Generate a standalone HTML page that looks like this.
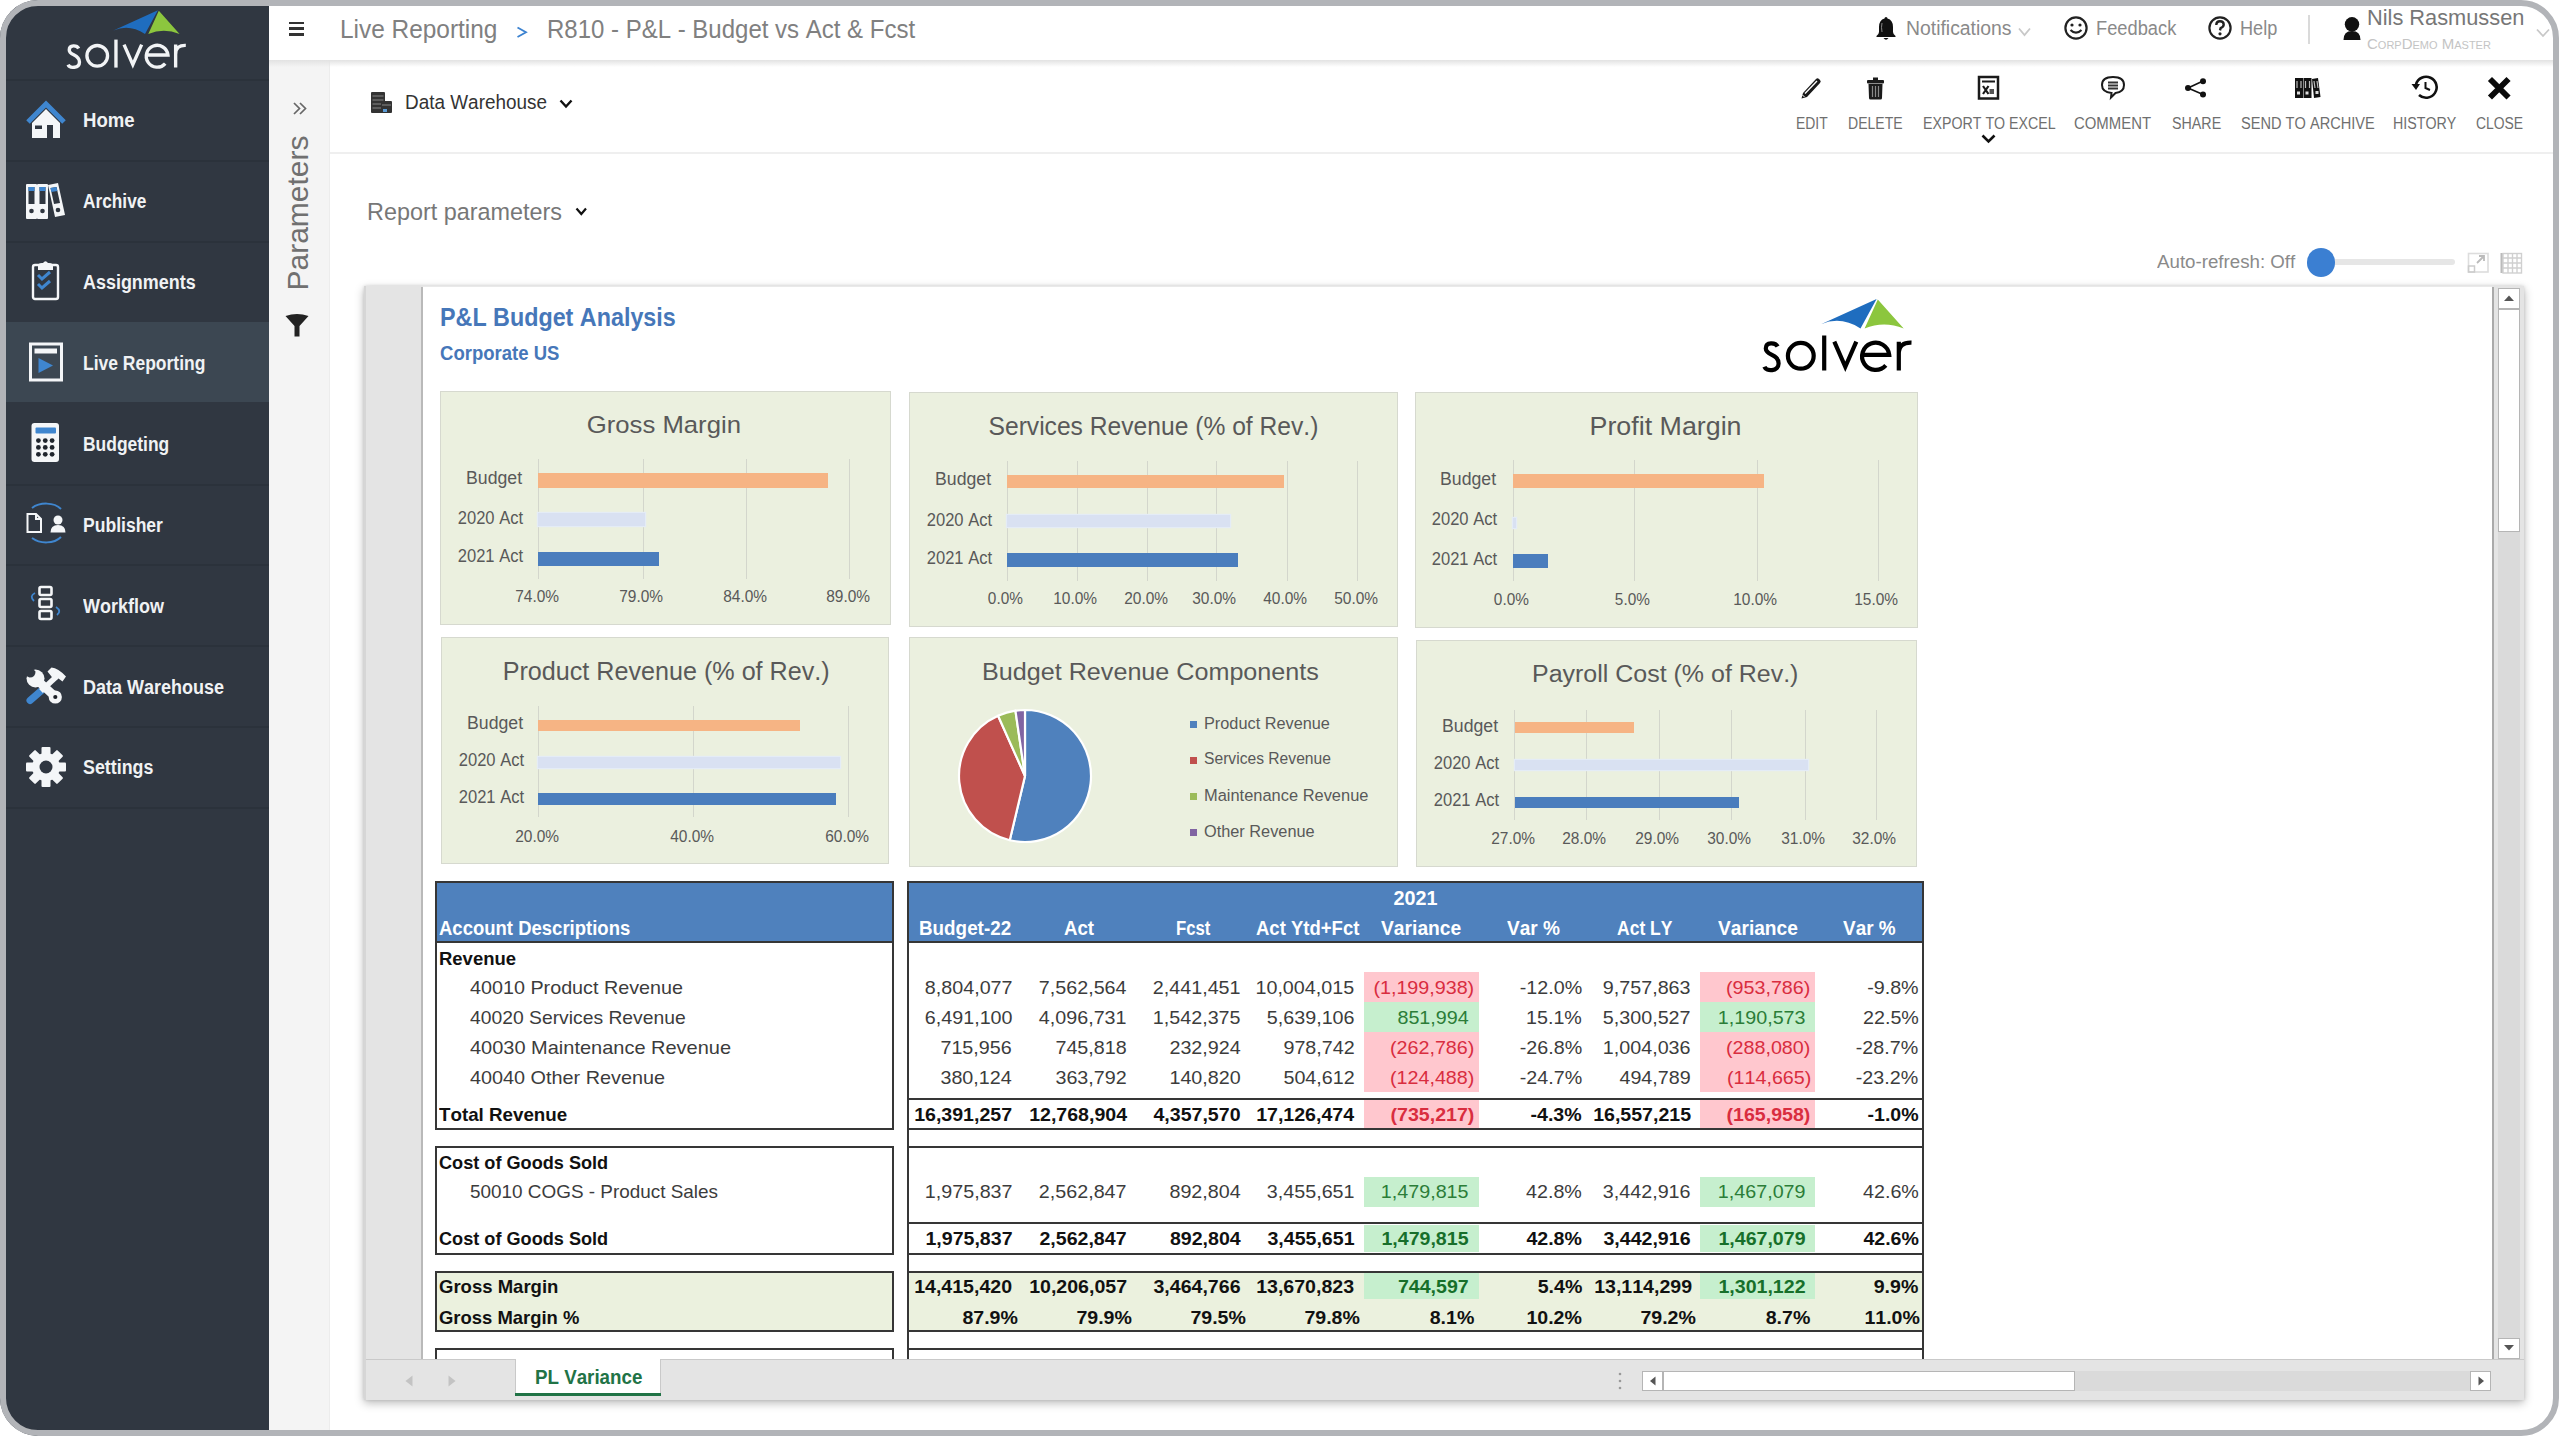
<!DOCTYPE html>
<html><head><meta charset="utf-8"><title>Solver - P&amp;L Budget vs Act &amp; Fcst</title>
<style>
html,body{margin:0;padding:0;width:2560px;height:1437px;overflow:hidden;background:#fff}
body{position:relative;font-family:"Liberation Sans",sans-serif;font-kerning:none}
.t{position:absolute;white-space:nowrap;line-height:1;font-family:"Liberation Sans",sans-serif}
svg{overflow:visible}
</style></head><body>
<div style="position:absolute;left:0px;top:0px;width:2560px;height:1437px;background:#fff"></div>
<div style="position:absolute;left:0px;top:0px;width:269px;height:1437px;background:#303741"></div>
<div style="position:absolute;left:0px;top:322px;width:269px;height:80px;background:#3c4752"></div>
<div style="position:absolute;left:0px;top:79px;width:269px;height:2px;background:#2b323b"></div>
<div style="position:absolute;left:0px;top:160px;width:269px;height:2px;background:#2b323b"></div>
<div style="position:absolute;left:0px;top:241px;width:269px;height:2px;background:#2b323b"></div>
<div style="position:absolute;left:0px;top:484px;width:269px;height:2px;background:#2b323b"></div>
<div style="position:absolute;left:0px;top:564px;width:269px;height:2px;background:#2b323b"></div>
<div style="position:absolute;left:0px;top:645px;width:269px;height:2px;background:#2b323b"></div>
<div style="position:absolute;left:0px;top:726px;width:269px;height:2px;background:#2b323b"></div>
<div style="position:absolute;left:0px;top:807px;width:269px;height:2px;background:#2b323b"></div>
<div style="position:absolute;left:269px;top:60px;width:61px;height:1380px;background:#f4f4f4"></div>
<div style="position:absolute;left:329px;top:60px;width:1px;height:1380px;background:#ececec"></div>
<div style="position:absolute;left:269px;top:0px;width:2291px;height:60px;background:#fff"></div>
<div style="position:absolute;left:269px;top:60px;width:2291px;height:7px;background:linear-gradient(#e2e2e2,rgba(255,255,255,0))"></div>
<div style="position:absolute;left:330px;top:152px;width:2230px;height:2px;background:#efefef"></div>
<div class="t" style="left:82.50px;top:110.25px;font-size:20.30px;font-weight:bold;color:#f0f2f4;transform:scaleX(0.9149);transform-origin:left 0;">Home</div>
<div class="t" style="left:82.50px;top:191.15px;font-size:20.30px;font-weight:bold;color:#f0f2f4;transform:scaleX(0.8513);transform-origin:left 0;">Archive</div>
<div class="t" style="left:82.50px;top:272.05px;font-size:20.30px;font-weight:bold;color:#f0f2f4;transform:scaleX(0.8849);transform-origin:left 0;">Assignments</div>
<div class="t" style="left:82.50px;top:352.95px;font-size:20.30px;font-weight:bold;color:#f0f2f4;transform:scaleX(0.8620);transform-origin:left 0;">Live Reporting</div>
<div class="t" style="left:82.50px;top:433.85px;font-size:20.30px;font-weight:bold;color:#f0f2f4;transform:scaleX(0.8600);transform-origin:left 0;">Budgeting</div>
<div class="t" style="left:82.50px;top:514.75px;font-size:20.30px;font-weight:bold;color:#f0f2f4;transform:scaleX(0.8649);transform-origin:left 0;">Publisher</div>
<div class="t" style="left:82.50px;top:595.65px;font-size:20.30px;font-weight:bold;color:#f0f2f4;transform:scaleX(0.8871);transform-origin:left 0;">Workflow</div>
<div class="t" style="left:82.50px;top:676.55px;font-size:20.30px;font-weight:bold;color:#f0f2f4;transform:scaleX(0.8881);transform-origin:left 0;">Data Warehouse</div>
<div class="t" style="left:82.50px;top:757.45px;font-size:20.30px;font-weight:bold;color:#f0f2f4;transform:scaleX(0.8791);transform-origin:left 0;">Settings</div>
<svg style="position:absolute;left:24px;top:100px;" width="44" height="42" viewBox="0 0 44 42"><path d="M4 22 L22 4 L40 22" fill="none" stroke="#3f86cf" stroke-width="5" stroke-linejoin="miter"/><path d="M8 23 L22 9 L36 23 L36 38 L29 38 L29 25 L23 25 L23 38 L8 38Z" fill="#f4f6f8"/><rect x="11" y="25.5" width="7" height="3.5" fill="#2f3640"/></svg>
<svg style="position:absolute;left:24px;top:182px;" width="44" height="40" viewBox="0 0 44 40"><g fill="#f4f6f8"><rect x="2" y="2" width="11" height="35" rx="1"/><rect x="13" y="2" width="11" height="35" rx="1"/><path d="M24 3 L34 1 L41 33 L31 35Z"/></g><g fill="#2f3640"><rect x="4.5" y="5" width="6" height="17"/><rect x="15.5" y="5" width="6" height="17"/><path d="M26.5 6 L32.5 5 L36 21 L30 22Z"/></g><g fill="#3f86cf"><rect x="4.5" y="5" width="6" height="4"/><rect x="15.5" y="5" width="6" height="4"/><path d="M26.5 6 L32.5 5 L33.3 9 L27.3 10Z"/></g><g fill="#2f3640"><circle cx="7.5" cy="29" r="2.3"/><circle cx="18.5" cy="29" r="2.3"/><circle cx="34" cy="28" r="2.3"/></g></svg>
<svg style="position:absolute;left:28px;top:258px;" width="36" height="46" viewBox="0 0 36 46"><rect x="5" y="7" width="25" height="34" rx="2" fill="none" stroke="#f4f6f8" stroke-width="2.4"/><path d="M10 12 L10 8 Q10 5 14 5 L15 5 Q17.5 1.5 20 5 L21 5 Q25 5 25 8 L25 12Z" fill="#f4f6f8"/><path d="M10 17 L14 21 L22 14 M10 26 L14 30 L22 23" fill="none" stroke="#3f86cf" stroke-width="3"/></svg>
<svg style="position:absolute;left:26px;top:340px;" width="40" height="44" viewBox="0 0 40 44"><rect x="4.5" y="4" width="31" height="36" fill="none" stroke="#f4f6f8" stroke-width="3"/><rect x="8.5" y="8.5" width="22.5" height="5" fill="#f4f6f8"/><path d="M12.5 18 L27 25.5 L12.5 33Z" fill="#3f86cf"/></svg>
<svg style="position:absolute;left:28px;top:420px;" width="36" height="46" viewBox="0 0 36 46"><rect x="3.5" y="3" width="27.5" height="39" rx="3" fill="#f4f6f8"/><rect x="7.5" y="7.5" width="20.5" height="6" rx="1" fill="#3f86cf"/><circle cx="10.4" cy="20.6" r="2.4" fill="#1f252d"/><circle cx="17.25" cy="20.6" r="2.4" fill="#1f252d"/><circle cx="24.1" cy="20.6" r="2.4" fill="#1f252d"/><circle cx="10.4" cy="27.450000000000003" r="2.4" fill="#1f252d"/><circle cx="17.25" cy="27.450000000000003" r="2.4" fill="#1f252d"/><circle cx="24.1" cy="27.450000000000003" r="2.4" fill="#1f252d"/><circle cx="10.4" cy="34.3" r="2.4" fill="#1f252d"/><circle cx="17.25" cy="34.3" r="2.4" fill="#1f252d"/><circle cx="24.1" cy="34.3" r="2.4" fill="#1f252d"/></svg>
<svg style="position:absolute;left:24px;top:505px;" width="46" height="36" viewBox="0 0 46 36"><path d="M8 3 C16 -3 30 -3 37 4" fill="none" stroke="#3f86cf" stroke-width="2"/><path d="M8 33 C16 39 30 39 37 32" fill="none" stroke="#3f86cf" stroke-width="2"/><path d="M3.5 9 L12 9 L17 14 L17 27 L3.5 27Z M12 9 L12 14 L17 14" fill="none" stroke="#f4f6f8" stroke-width="2"/><circle cx="34" cy="15" r="4.5" fill="#f4f6f8"/><path d="M26.5 27.5 Q26.5 20 34 20 Q41.5 20 41.5 27.5Z" fill="#f4f6f8"/></svg>
<svg style="position:absolute;left:24px;top:582px;" width="44" height="46" viewBox="0 0 44 46"><g fill="none" stroke="#f4f6f8" stroke-width="2.6"><rect x="15.5" y="5" width="12" height="8" rx="1.5"/><rect x="15.5" y="17" width="12" height="8" rx="1.5"/><rect x="15.5" y="29" width="12" height="8" rx="1.5"/></g><path d="M11 11 Q5 14 10 19" fill="none" stroke="#3f86cf" stroke-width="1.8"/><path d="M32 25 Q38 29 33 33" fill="none" stroke="#3f86cf" stroke-width="1.8"/></svg>
<svg style="position:absolute;left:18px;top:655px;" width="60" height="60" viewBox="0 0 60 60"><path d="M12 45.5 L23.5 35.5" stroke="#3f86cf" stroke-width="7" stroke-linecap="round"/><path d="M23 36 L38 22" stroke="#f4f6f8" stroke-width="5.5"/><path d="M29.5 16.5 L33.5 12.5 Q40 13 48 21.5 L44.5 26.5 L40.5 23.5 L37 26 Z" fill="#f4f6f8"/><path d="M19 25 L37.5 42" stroke="#f4f6f8" stroke-width="8.5" stroke-linecap="round"/><circle cx="37.3" cy="42" r="6.6" fill="#f4f6f8"/><circle cx="37.3" cy="42" r="2.1" fill="#1c2027"/><circle cx="17.5" cy="23.5" r="9" fill="#f4f6f8"/><path d="M4 19 L12 11 L17.5 16.5 Q17.5 22.5 11.5 22.5Z" fill="#303741"/></svg>
<svg style="position:absolute;left:22px;top:743px;" width="48" height="48" viewBox="0 0 48 48"><rect x="19.5" y="4" width="9" height="10" rx="1" transform="rotate(0 24 24)" fill="#f4f6f8"/><rect x="19.5" y="4" width="9" height="10" rx="1" transform="rotate(45 24 24)" fill="#f4f6f8"/><rect x="19.5" y="4" width="9" height="10" rx="1" transform="rotate(90 24 24)" fill="#f4f6f8"/><rect x="19.5" y="4" width="9" height="10" rx="1" transform="rotate(135 24 24)" fill="#f4f6f8"/><rect x="19.5" y="4" width="9" height="10" rx="1" transform="rotate(180 24 24)" fill="#f4f6f8"/><rect x="19.5" y="4" width="9" height="10" rx="1" transform="rotate(225 24 24)" fill="#f4f6f8"/><rect x="19.5" y="4" width="9" height="10" rx="1" transform="rotate(270 24 24)" fill="#f4f6f8"/><rect x="19.5" y="4" width="9" height="10" rx="1" transform="rotate(315 24 24)" fill="#f4f6f8"/><circle cx="24" cy="24" r="14" fill="#f4f6f8"/><circle cx="24" cy="24" r="6.5" fill="#2f3640"/></svg>
<div style="position:absolute;left:289px;top:21.8px;width:15px;height:2.6px;background:#333"></div>
<div style="position:absolute;left:289px;top:27.4px;width:15px;height:2.6px;background:#333"></div>
<div style="position:absolute;left:289px;top:33.0px;width:15px;height:2.6px;background:#333"></div>
<div class="t" style="left:340.00px;top:17.41px;font-size:25.40px;font-weight:normal;color:#808080;transform:scaleX(0.9616);transform-origin:left 0;">Live Reporting</div>
<svg style="position:absolute;left:516px;top:26px;" width="12" height="13" viewBox="0 0 12 13"><path d="M1.5 1.5 L10 6.3 L1.5 11" fill="none" stroke="#3b82d0" stroke-width="1.8"/></svg>
<div class="t" style="left:547.00px;top:17.41px;font-size:25.40px;font-weight:normal;color:#808080;transform:scaleX(0.9450);transform-origin:left 0;">R810 - P&amp;L - Budget vs Act &amp; Fcst</div>
<div class="t" style="left:1906.00px;top:18.84px;font-size:19.60px;font-weight:normal;color:#8a8a8a;transform:scaleX(0.9891);transform-origin:left 0;">Notifications</div>
<svg style="position:absolute;left:2018px;top:27px;" width="13" height="10" viewBox="0 0 13 10"><path d="M1 1.5 L6.5 8 L12 1.5" fill="none" stroke="#c8c8c8" stroke-width="1.8"/></svg>
<div class="t" style="left:2096.00px;top:18.84px;font-size:19.60px;font-weight:normal;color:#8a8a8a;transform:scaleX(0.9329);transform-origin:left 0;">Feedback</div>
<div class="t" style="left:2240.00px;top:18.84px;font-size:19.60px;font-weight:normal;color:#8a8a8a;transform:scaleX(0.9253);transform-origin:left 0;">Help</div>
<div style="position:absolute;left:2307.5px;top:15px;width:2px;height:29px;background:#dadada"></div>
<div class="t" style="left:2367.00px;top:7.27px;font-size:22.50px;font-weight:normal;color:#777;transform:scaleX(0.9683);transform-origin:left 0;">Nils Rasmussen</div>
<div class="t" style="left:2367px;top:35.5px;font-size:15px;color:#c4c4c4;font-variant:small-caps;transform:scaleX(1.0);transform-origin:left 0">CorpDemo Master</div>
<svg style="position:absolute;left:2536px;top:28px;" width="14" height="10" viewBox="0 0 14 10"><path d="M1 1.5 L7 8 L13 1.5" fill="none" stroke="#c8c8c8" stroke-width="1.8"/></svg>
<svg style="position:absolute;left:1874px;top:15px;" width="24" height="26" viewBox="0 0 24 26"><path d="M12 2 Q13.5 2 13.5 3.5 Q19 5 19 12 L19 17 Q19 19 21.5 21 L21.5 22 L2.5 22 L2.5 21 Q5 19 5 17 L5 12 Q5 5 10.5 3.5 Q10.5 2 12 2Z" fill="#111"/><path d="M9.5 23 Q12 26.5 14.5 23Z" fill="#111"/><path d="M8 8 Q7 12 8 17" stroke="#888" stroke-width="1" fill="none"/></svg>
<svg style="position:absolute;left:2063px;top:15px;" width="26" height="26" viewBox="0 0 26 26"><circle cx="13" cy="13" r="10.6" fill="none" stroke="#222" stroke-width="2.2"/><circle cx="9" cy="10" r="1.6" fill="#222"/><circle cx="17" cy="10" r="1.6" fill="#222"/><path d="M7.5 15 Q13 20.5 18.5 15" fill="none" stroke="#222" stroke-width="2.2"/></svg>
<svg style="position:absolute;left:2207px;top:15px;" width="26" height="26" viewBox="0 0 26 26"><circle cx="13" cy="13" r="10.6" fill="none" stroke="#222" stroke-width="2.2"/><path d="M9.3 10 Q9.3 6.3 13 6.3 Q16.7 6.3 16.7 9.6 Q16.7 12 13.6 13.2 L13 15.3" fill="none" stroke="#222" stroke-width="2.4"/><circle cx="13" cy="18.8" r="1.6" fill="#222"/></svg>
<svg style="position:absolute;left:2342px;top:15px;" width="20" height="26" viewBox="0 0 20 26"><circle cx="10" cy="9.3" r="7.2" fill="#111"/><path d="M1.5 25 Q1.5 16 10 16 Q18.5 16 18.5 25Z" fill="#111"/></svg>
<svg style="position:absolute;left:292px;top:101px;" width="16" height="15" viewBox="0 0 16 15"><path d="M2 2 L7.5 7.5 L2 13 M8 2 L13.5 7.5 L8 13" fill="none" stroke="#666" stroke-width="1.7"/></svg>
<div class="t" style="left:298px;top:212.5px;font-size:30px;font-weight:normal;color:#707070;transform:translate(-50%,-50%) rotate(-90deg) scaleX(1.0);transform-origin:center;line-height:1">Parameters</div>
<svg style="position:absolute;left:284px;top:313px;" width="26" height="26" viewBox="0 0 26 26"><path d="M1.5 3 Q13 -1 24.5 3 L15.5 13 L15.5 23.5 L10.5 23.5 L10.5 13Z" fill="#222"/></svg>
<svg style="position:absolute;left:370px;top:91px;" width="24" height="24" viewBox="0 0 24 24"><rect x="1" y="1" width="14" height="21" rx="1" fill="#333"/><g stroke="#888" stroke-width="1"><path d="M2.5 5 H13.5 M2.5 9 H13.5 M2.5 13 H13.5 M2.5 17 H13.5"/></g><rect x="11" y="10" width="11" height="12" rx="1" fill="#333"/><rect x="13" y="18" width="4" height="3" fill="#5b9bd5"/><path d="M12 14 H21" stroke="#888" stroke-width="1"/></svg>
<div class="t" style="left:405.00px;top:92.80px;font-size:19.30px;font-weight:normal;color:#333;transform:scaleX(0.9819);transform-origin:left 0;">Data Warehouse</div>
<svg style="position:absolute;left:559px;top:99px;" width="14" height="10" viewBox="0 0 14 10"><path d="M1.5 1.5 L7 7.5 L12.5 1.5" fill="none" stroke="#111" stroke-width="2.4"/></svg>
<div class="t" style="left:1795.90px;top:114.61px;font-size:17.40px;font-weight:normal;color:#6f6f6f;transform:scaleX(0.7998);transform-origin:left 0;">EDIT</div>
<div class="t" style="left:1848.40px;top:114.61px;font-size:17.40px;font-weight:normal;color:#6f6f6f;transform:scaleX(0.8066);transform-origin:left 0;">DELETE</div>
<div class="t" style="left:1922.70px;top:114.61px;font-size:17.40px;font-weight:normal;color:#6f6f6f;transform:scaleX(0.8177);transform-origin:left 0;">EXPORT TO EXCEL</div>
<div class="t" style="left:2074.20px;top:114.61px;font-size:17.40px;font-weight:normal;color:#6f6f6f;transform:scaleX(0.8577);transform-origin:left 0;">COMMENT</div>
<div class="t" style="left:2171.60px;top:114.61px;font-size:17.40px;font-weight:normal;color:#6f6f6f;transform:scaleX(0.8207);transform-origin:left 0;">SHARE</div>
<div class="t" style="left:2240.50px;top:114.61px;font-size:17.40px;font-weight:normal;color:#6f6f6f;transform:scaleX(0.8389);transform-origin:left 0;">SEND TO ARCHIVE</div>
<div class="t" style="left:2393.20px;top:114.61px;font-size:17.40px;font-weight:normal;color:#6f6f6f;transform:scaleX(0.8186);transform-origin:left 0;">HISTORY</div>
<div class="t" style="left:2476.30px;top:114.61px;font-size:17.40px;font-weight:normal;color:#6f6f6f;transform:scaleX(0.7984);transform-origin:left 0;">CLOSE</div>
<svg style="position:absolute;left:1799px;top:75px;" width="24" height="25" viewBox="0 0 24 25"><path d="M4 18 L17 4 Q18.5 2.5 20 4 L21 5 Q22.5 6.5 21 8 L8 22 L2.5 23.5Z" fill="#1a1a1a"/><path d="M6 18.5 L18 6" stroke="#fff" stroke-width="1.3"/><path d="M3.5 20 L5.5 22" stroke="#fff" stroke-width="1"/></svg>
<svg style="position:absolute;left:1865px;top:76px;" width="22" height="25" viewBox="0 0 22 25"><rect x="2" y="4" width="17" height="3.5" rx="1" fill="#1a1a1a"/><rect x="8" y="1.5" width="5" height="3" fill="#1a1a1a"/><path d="M3.5 8 L17.5 8 L17 22 Q17 23.5 15.5 23.5 L5.5 23.5 Q4 23.5 4 22Z" fill="#1a1a1a"/><path d="M7.5 10 V21 M10.5 10 V21 M13.5 10 V21" stroke="#888" stroke-width="1.2"/></svg>
<svg style="position:absolute;left:1976px;top:74px;" width="25" height="27" viewBox="0 0 25 27"><rect x="3" y="3" width="19" height="21.5" fill="none" stroke="#1a1a1a" stroke-width="2.5"/><rect x="6" y="6.5" width="13" height="2" fill="#1a1a1a"/><path d="M7 12 L12.5 20 M12.5 12 L7 20" stroke="#1a1a1a" stroke-width="2.2"/><rect x="13.5" y="15" width="4.5" height="5" fill="#555"/></svg>
<svg style="position:absolute;left:1981px;top:134px;" width="15" height="10" viewBox="0 0 15 10"><path d="M1.5 1.5 L7.5 7.5 L13.5 1.5" fill="none" stroke="#111" stroke-width="2.6"/></svg>
<svg style="position:absolute;left:2100px;top:74px;" width="27" height="27" viewBox="0 0 27 27"><path d="M13 3 Q24 3 24 11 Q24 18 15.5 19 L11 23.5 L11.5 19 Q2 18 2 11 Q2 3 13 3Z" fill="none" stroke="#1a1a1a" stroke-width="2"/><path d="M8 8.5 H18 M8 11.5 H18 M8 14.5 H18" stroke="#333" stroke-width="2"/></svg>
<svg style="position:absolute;left:2183px;top:75px;" width="26" height="24" viewBox="0 0 26 24"><path d="M5 13 L20 6 M5 13 L20 19.5" stroke="#111" stroke-width="1.6"/><circle cx="5" cy="13" r="3" fill="#111"/><circle cx="20" cy="6.3" r="3" fill="#111"/><circle cx="20" cy="19.5" r="3" fill="#111"/></svg>
<svg style="position:absolute;left:2293px;top:76px;" width="28" height="25" viewBox="0 0 28 25"><rect x="2" y="2" width="8" height="20" fill="#111"/><rect x="10.5" y="2" width="8" height="20" fill="#111"/><path d="M19 3 L25 2 L27.5 21 L21 22Z" fill="#111"/><path d="M4 5 V12 M8 5 V12 M12.5 5 V12 M16.5 5 V12 M21 5 L22 12 M24 5 L25 12" stroke="#bbb" stroke-width="1.2"/><rect x="4" y="15.5" width="3" height="3" fill="#ddd"/><rect x="12.5" y="15.5" width="3" height="3" fill="#ddd"/><rect x="22.5" y="15" width="3" height="3" fill="#ddd"/></svg>
<svg style="position:absolute;left:2410px;top:74px;" width="30" height="27" viewBox="0 0 30 27"><path d="M6 10.5 A10.5 10.5 0 1 1 9 21" fill="none" stroke="#111" stroke-width="2.6"/><path d="M1.5 10 L10 10 L6 16Z" fill="#111"/><path d="M15.5 8 L15.5 14 L20 16" fill="none" stroke="#111" stroke-width="2"/></svg>
<svg style="position:absolute;left:2487px;top:76px;" width="26" height="24" viewBox="0 0 26 24"><path d="M5 5 L19.5 19.5 M19.5 5 L5 19.5" stroke="#0a0a0a" stroke-width="5.8" stroke-linecap="square"/></svg>
<div class="t" style="left:367.00px;top:199.62px;font-size:24.10px;font-weight:normal;color:#777;transform:scaleX(0.9705);transform-origin:left 0;">Report parameters</div>
<svg style="position:absolute;left:575px;top:207px;" width="13" height="10" viewBox="0 0 13 10"><path d="M1.5 1.5 L6.3 7 L11 1.5" fill="none" stroke="#111" stroke-width="2.2"/></svg>
<div class="t" style="left:2157.00px;top:251.88px;font-size:19.20px;font-weight:normal;color:#8a8a8a;transform:scaleX(0.9748);transform-origin:left 0;">Auto-refresh: Off</div>
<div style="position:absolute;left:2321px;top:259px;width:134px;height:6px;background:#e6e6e6;border-radius:3px"></div>
<div style="position:absolute;left:2306.6px;top:247.8px;width:28.8px;height:28.8px;background:#3b7fd2;border-radius:50%"></div>
<svg style="position:absolute;left:2467px;top:252px;" width="24" height="22" viewBox="0 0 24 22"><rect x="1.5" y="1.5" width="19.5" height="18.5" fill="none" stroke="#ddd" stroke-width="1.6"/><rect x="1.5" y="14" width="6" height="6" fill="none" stroke="#ccc" stroke-width="1.5"/><path d="M10 11 L17 4 M12 4 H17 V9" fill="none" stroke="#bbb" stroke-width="1.8"/></svg>
<svg style="position:absolute;left:2500px;top:250px;" width="23" height="25" viewBox="0 0 23 25"><g stroke="#d0d0d0" stroke-width="1.4" fill="none"><rect x="3" y="3.5" width="18.5" height="19.5"/><path d="M3 8 H21.5 M3 13 H21.5 M3 18 H21.5 M8 3.5 V23 M12.5 3.5 V23 M17 3.5 V23"/></g><path d="M1.5 3 V23" stroke="#bbb" stroke-width="2"/></svg>
<div style="position:absolute;left:364px;top:286px;width:2160px;height:1114px;background:#e4e4e4;box-shadow:0 3px 9px rgba(0,0,0,0.28), 0 0 3px rgba(0,0,0,0.12)"></div>
<div style="position:absolute;left:364px;top:286px;width:2px;height:1114px;background:#d6d6d6"></div>
<div style="position:absolute;left:421px;top:287px;width:2px;height:1072px;background:#b9b9b9"></div>
<div style="position:absolute;left:423px;top:287px;width:2069px;height:1072px;background:#fff"></div>
<div style="position:absolute;left:423px;top:286px;width:2069px;height:1px;background:#e9e9e9"></div>
<div style="position:absolute;left:2492px;top:287px;width:2px;height:1072px;background:#aaa"></div>
<div class="t" style="left:439.50px;top:304.34px;font-size:26.30px;font-weight:bold;color:#4677b9;transform:scaleX(0.8865);transform-origin:left 0;">P&amp;L Budget Analysis</div>
<div class="t" style="left:439.50px;top:342.75px;font-size:20.30px;font-weight:bold;color:#4677b9;transform:scaleX(0.9133);transform-origin:left 0;">Corporate US</div>
<svg style="position:absolute;left:1758.0px;top:290.9px;" width="160" height="90" viewBox="0 0 160 90"><path d="M63.00 33.20 L118.60 7.90 L102.50 37.40 Q82.90 24.80 63.00 33.20Z" fill="#1f6dbf"/><path d="M119.80 8.40 L145.70 37.40 Q126.00 29.70 106.60 37.40Z" fill="#8cc63e"/><g fill="none" stroke="#000" stroke-width="4.20" stroke-linecap="butt"><path d="M19.60 55.50 C17.50 51.40 7.80 50.60 7.80 57.40 C7.80 64.40 20.60 62.80 20.60 72.40 C20.60 80.60 8.20 80.80 6.40 75.80"/><circle cx="42.80" cy="64.80" r="12.90"/><path d="M66.20 44.50 L66.20 79.50"/><path d="M76.30 50.70 L87.30 75.80 L98.30 50.70" stroke-linejoin="miter"/><path d="M103.80 63.80 L131.20 63.80 A13.60 13.60 0 1 0 127.80 74.40"/><path d="M140.80 50.70 L140.80 79.50 M140.80 63.00 C140.80 54.50 145.50 51.40 153.50 51.70"/></g></svg>
<svg style="position:absolute;left:63.0px;top:3.5px;" width="128" height="72" viewBox="0 0 128 72"><path d="M50.40 26.56 L94.88 6.32 L82.00 29.92 Q66.32 19.84 50.40 26.56Z" fill="#1f6dbf"/><path d="M95.84 6.72 L116.56 29.92 Q100.80 23.76 85.28 29.92Z" fill="#8cc63e"/><g fill="none" stroke="#f2f4f6" stroke-width="3.36" stroke-linecap="butt"><path d="M15.68 44.40 C14.00 41.12 6.24 40.48 6.24 45.92 C6.24 51.52 16.48 50.24 16.48 57.92 C16.48 64.48 6.56 64.64 5.12 60.64"/><circle cx="34.24" cy="51.84" r="10.32"/><path d="M52.96 35.60 L52.96 63.60"/><path d="M61.04 40.56 L69.84 60.64 L78.64 40.56" stroke-linejoin="miter"/><path d="M83.04 51.04 L104.96 51.04 A10.88 10.88 0 1 0 102.24 59.52"/><path d="M112.64 40.56 L112.64 63.60 M112.64 50.40 C112.64 43.60 116.40 41.12 122.80 41.36"/></g></svg>
<div style="position:absolute;left:440px;top:391px;width:451px;height:234px;background:#ebf0df;border:1px solid #d6d9cf;box-sizing:border-box"></div>
<div class="t" style="left:591.06px;top:412.87px;font-size:24.27px;font-weight:normal;color:#595959;transform:scaleX(1.0592);transform-origin:center 0;">Gross Margin</div>
<div style="position:absolute;left:538px;top:459px;width:1px;height:120px;background:#d3d6cc"></div>
<div style="position:absolute;left:643px;top:459px;width:1px;height:120px;background:#d3d6cc"></div>
<div style="position:absolute;left:746px;top:459px;width:1px;height:120px;background:#d3d6cc"></div>
<div style="position:absolute;left:849px;top:459px;width:1px;height:120px;background:#d3d6cc"></div>
<div style="position:absolute;left:538.3px;top:473.4px;width:289.70000000000005px;height:14.200000000000045px;background:#f6b484"></div>
<div style="position:absolute;left:538.3px;top:513px;width:106.70000000000005px;height:13px;background:#d9e1f2;box-shadow:0 0 1px 1px #e4ecf6"></div>
<div style="position:absolute;left:538.3px;top:551.5px;width:120.70000000000005px;height:14.5px;background:#4a7dbd"></div>
<div class="t" style="left:464.55px;top:468.90px;font-size:18.00px;font-weight:normal;color:#595959;transform:scaleX(0.9816);transform-origin:right 0;">Budget</div>
<div class="t" style="left:451.54px;top:508.60px;font-size:18.00px;font-weight:normal;color:#595959;transform:scaleX(0.9192);transform-origin:right 0;">2020 Act</div>
<div class="t" style="left:451.54px;top:546.90px;font-size:18.00px;font-weight:normal;color:#595959;transform:scaleX(0.9192);transform-origin:right 0;">2021 Act</div>
<div class="t" style="left:512.70px;top:587.95px;font-size:17.00px;font-weight:normal;color:#595959;transform:scaleX(0.9087);transform-origin:center 0;">74.0%</div>
<div class="t" style="left:617.00px;top:587.95px;font-size:17.00px;font-weight:normal;color:#595959;transform:scaleX(0.9087);transform-origin:center 0;">79.0%</div>
<div class="t" style="left:720.80px;top:587.95px;font-size:17.00px;font-weight:normal;color:#595959;transform:scaleX(0.9087);transform-origin:center 0;">84.0%</div>
<div class="t" style="left:823.80px;top:587.95px;font-size:17.00px;font-weight:normal;color:#595959;transform:scaleX(0.9087);transform-origin:center 0;">89.0%</div>
<div style="position:absolute;left:909px;top:392px;width:489px;height:235px;background:#ebf0df;border:1px solid #d6d9cf;box-sizing:border-box"></div>
<div class="t" style="left:985.50px;top:413.55px;font-size:25.00px;font-weight:normal;color:#595959;transform:scaleX(0.9850);transform-origin:center 0;">Services Revenue (% of Rev.)</div>
<div style="position:absolute;left:1007px;top:461px;width:1px;height:120px;background:#d3d6cc"></div>
<div style="position:absolute;left:1077px;top:461px;width:1px;height:120px;background:#d3d6cc"></div>
<div style="position:absolute;left:1147px;top:461px;width:1px;height:120px;background:#d3d6cc"></div>
<div style="position:absolute;left:1216px;top:461px;width:1px;height:120px;background:#d3d6cc"></div>
<div style="position:absolute;left:1287px;top:461px;width:1px;height:120px;background:#d3d6cc"></div>
<div style="position:absolute;left:1357px;top:461px;width:1px;height:120px;background:#d3d6cc"></div>
<div style="position:absolute;left:1007.3px;top:474.5px;width:276.70000000000005px;height:13.199999999999989px;background:#f6b484"></div>
<div style="position:absolute;left:1007.3px;top:515px;width:222.70000000000005px;height:11.700000000000045px;background:#d9e1f2;box-shadow:0 0 1px 1px #e4ecf6"></div>
<div style="position:absolute;left:1007.3px;top:553px;width:230.5px;height:14px;background:#4a7dbd"></div>
<div class="t" style="left:934.35px;top:470.40px;font-size:18.00px;font-weight:normal;color:#595959;transform:scaleX(0.9816);transform-origin:right 0;">Budget</div>
<div class="t" style="left:921.34px;top:510.60px;font-size:18.00px;font-weight:normal;color:#595959;transform:scaleX(0.9192);transform-origin:right 0;">2020 Act</div>
<div class="t" style="left:921.34px;top:549.20px;font-size:18.00px;font-weight:normal;color:#595959;transform:scaleX(0.9192);transform-origin:right 0;">2021 Act</div>
<div class="t" style="left:986.43px;top:589.85px;font-size:17.00px;font-weight:normal;color:#595959;transform:scaleX(0.9043);transform-origin:center 0;">0.0%</div>
<div class="t" style="left:1051.40px;top:589.85px;font-size:17.00px;font-weight:normal;color:#595959;transform:scaleX(0.9087);transform-origin:center 0;">10.0%</div>
<div class="t" style="left:1121.80px;top:589.85px;font-size:17.00px;font-weight:normal;color:#595959;transform:scaleX(0.9087);transform-origin:center 0;">20.0%</div>
<div class="t" style="left:1190.30px;top:589.85px;font-size:17.00px;font-weight:normal;color:#595959;transform:scaleX(0.9087);transform-origin:center 0;">30.0%</div>
<div class="t" style="left:1261.40px;top:589.85px;font-size:17.00px;font-weight:normal;color:#595959;transform:scaleX(0.9087);transform-origin:center 0;">40.0%</div>
<div class="t" style="left:1331.80px;top:589.85px;font-size:17.00px;font-weight:normal;color:#595959;transform:scaleX(0.9087);transform-origin:center 0;">50.0%</div>
<div style="position:absolute;left:1415px;top:392px;width:503px;height:236px;background:#ebf0df;border:1px solid #d6d9cf;box-sizing:border-box"></div>
<div class="t" style="left:1591.23px;top:412.94px;font-size:26.31px;font-weight:normal;color:#595959;transform:scaleX(1.0192);transform-origin:center 0;">Profit Margin</div>
<div style="position:absolute;left:1513px;top:460px;width:1px;height:120.5px;background:#d3d6cc"></div>
<div style="position:absolute;left:1634px;top:460px;width:1px;height:120.5px;background:#d3d6cc"></div>
<div style="position:absolute;left:1757px;top:460px;width:1px;height:120.5px;background:#d3d6cc"></div>
<div style="position:absolute;left:1878px;top:460px;width:1px;height:120.5px;background:#d3d6cc"></div>
<div style="position:absolute;left:1512.7px;top:474px;width:251.70000000000005px;height:14px;background:#f6b484"></div>
<div style="position:absolute;left:1512.7px;top:518px;width:3.2999999999999545px;height:10px;background:#d9e1f2;box-shadow:0 0 1px 1px #e4ecf6"></div>
<div style="position:absolute;left:1512.7px;top:554.2px;width:35.59999999999991px;height:14.299999999999955px;background:#4a7dbd"></div>
<div class="t" style="left:1439.35px;top:469.90px;font-size:18.00px;font-weight:normal;color:#595959;transform:scaleX(0.9816);transform-origin:right 0;">Budget</div>
<div class="t" style="left:1426.34px;top:509.90px;font-size:18.00px;font-weight:normal;color:#595959;transform:scaleX(0.9192);transform-origin:right 0;">2020 Act</div>
<div class="t" style="left:1426.34px;top:549.90px;font-size:18.00px;font-weight:normal;color:#595959;transform:scaleX(0.9192);transform-origin:right 0;">2021 Act</div>
<div class="t" style="left:1491.83px;top:590.75px;font-size:17.00px;font-weight:normal;color:#595959;transform:scaleX(0.9043);transform-origin:center 0;">0.0%</div>
<div class="t" style="left:1613.33px;top:590.75px;font-size:17.00px;font-weight:normal;color:#595959;transform:scaleX(0.9043);transform-origin:center 0;">5.0%</div>
<div class="t" style="left:1731.30px;top:590.75px;font-size:17.00px;font-weight:normal;color:#595959;transform:scaleX(0.9087);transform-origin:center 0;">10.0%</div>
<div class="t" style="left:1852.20px;top:590.75px;font-size:17.00px;font-weight:normal;color:#595959;transform:scaleX(0.9087);transform-origin:center 0;">15.0%</div>
<div style="position:absolute;left:441px;top:637px;width:448px;height:227px;background:#ebf0df;border:1px solid #d6d9cf;box-sizing:border-box"></div>
<div class="t" style="left:497.61px;top:658.61px;font-size:25.87px;font-weight:normal;color:#595959;transform:scaleX(0.9723);transform-origin:center 0;">Product Revenue (% of Rev.)</div>
<div style="position:absolute;left:538px;top:706px;width:1px;height:110.60000000000002px;background:#d3d6cc"></div>
<div style="position:absolute;left:693px;top:706px;width:1px;height:110.60000000000002px;background:#d3d6cc"></div>
<div style="position:absolute;left:848px;top:706px;width:1px;height:110.60000000000002px;background:#d3d6cc"></div>
<div style="position:absolute;left:538.4px;top:719.6px;width:261.9px;height:11.699999999999932px;background:#f6b484"></div>
<div style="position:absolute;left:538.4px;top:757px;width:301.30000000000007px;height:10.799999999999955px;background:#d9e1f2;box-shadow:0 0 1px 1px #e4ecf6"></div>
<div style="position:absolute;left:538.4px;top:793px;width:297.6px;height:12.299999999999955px;background:#4a7dbd"></div>
<div class="t" style="left:465.75px;top:713.70px;font-size:18.00px;font-weight:normal;color:#595959;transform:scaleX(0.9816);transform-origin:right 0;">Budget</div>
<div class="t" style="left:452.74px;top:751.20px;font-size:18.00px;font-weight:normal;color:#595959;transform:scaleX(0.9192);transform-origin:right 0;">2020 Act</div>
<div class="t" style="left:452.74px;top:787.80px;font-size:18.00px;font-weight:normal;color:#595959;transform:scaleX(0.9192);transform-origin:right 0;">2021 Act</div>
<div class="t" style="left:512.80px;top:827.75px;font-size:17.00px;font-weight:normal;color:#595959;transform:scaleX(0.9087);transform-origin:center 0;">20.0%</div>
<div class="t" style="left:667.80px;top:827.75px;font-size:17.00px;font-weight:normal;color:#595959;transform:scaleX(0.9087);transform-origin:center 0;">40.0%</div>
<div class="t" style="left:822.50px;top:827.75px;font-size:17.00px;font-weight:normal;color:#595959;transform:scaleX(0.9087);transform-origin:center 0;">60.0%</div>
<div style="position:absolute;left:1416px;top:640px;width:501px;height:227px;background:#ebf0df;border:1px solid #d6d9cf;box-sizing:border-box"></div>
<div class="t" style="left:1534.84px;top:661.94px;font-size:24.42px;font-weight:normal;color:#595959;transform:scaleX(1.0231);transform-origin:center 0;">Payroll Cost (% of Rev.)</div>
<div style="position:absolute;left:1514px;top:710px;width:1px;height:109.79999999999995px;background:#d3d6cc"></div>
<div style="position:absolute;left:1586px;top:710px;width:1px;height:109.79999999999995px;background:#d3d6cc"></div>
<div style="position:absolute;left:1659px;top:710px;width:1px;height:109.79999999999995px;background:#d3d6cc"></div>
<div style="position:absolute;left:1731px;top:710px;width:1px;height:109.79999999999995px;background:#d3d6cc"></div>
<div style="position:absolute;left:1805px;top:710px;width:1px;height:109.79999999999995px;background:#d3d6cc"></div>
<div style="position:absolute;left:1876px;top:710px;width:1px;height:109.79999999999995px;background:#d3d6cc"></div>
<div style="position:absolute;left:1514.5px;top:722.4px;width:119.59999999999991px;height:11.0px;background:#f6b484"></div>
<div style="position:absolute;left:1514.5px;top:759.7px;width:293.5px;height:10.599999999999909px;background:#d9e1f2;box-shadow:0 0 1px 1px #e4ecf6"></div>
<div style="position:absolute;left:1514.5px;top:796.6px;width:224.0px;height:11.600000000000023px;background:#4a7dbd"></div>
<div class="t" style="left:1440.95px;top:716.90px;font-size:18.00px;font-weight:normal;color:#595959;transform:scaleX(0.9816);transform-origin:right 0;">Budget</div>
<div class="t" style="left:1427.94px;top:754.20px;font-size:18.00px;font-weight:normal;color:#595959;transform:scaleX(0.9192);transform-origin:right 0;">2020 Act</div>
<div class="t" style="left:1427.94px;top:791.30px;font-size:18.00px;font-weight:normal;color:#595959;transform:scaleX(0.9192);transform-origin:right 0;">2021 Act</div>
<div class="t" style="left:1488.90px;top:830.25px;font-size:17.00px;font-weight:normal;color:#595959;transform:scaleX(0.9087);transform-origin:center 0;">27.0%</div>
<div class="t" style="left:1560.00px;top:830.25px;font-size:17.00px;font-weight:normal;color:#595959;transform:scaleX(0.9087);transform-origin:center 0;">28.0%</div>
<div class="t" style="left:1633.40px;top:830.25px;font-size:17.00px;font-weight:normal;color:#595959;transform:scaleX(0.9087);transform-origin:center 0;">29.0%</div>
<div class="t" style="left:1705.10px;top:830.25px;font-size:17.00px;font-weight:normal;color:#595959;transform:scaleX(0.9087);transform-origin:center 0;">30.0%</div>
<div class="t" style="left:1779.00px;top:830.25px;font-size:17.00px;font-weight:normal;color:#595959;transform:scaleX(0.9087);transform-origin:center 0;">31.0%</div>
<div class="t" style="left:1850.00px;top:830.25px;font-size:17.00px;font-weight:normal;color:#595959;transform:scaleX(0.9087);transform-origin:center 0;">32.0%</div>
<div style="position:absolute;left:909px;top:637px;width:489px;height:230px;background:#ebf0df;border:1px solid #d6d9cf;box-sizing:border-box"></div>
<div class="t" style="left:986.34px;top:659.52px;font-size:24.56px;font-weight:normal;color:#595959;transform:scaleX(1.0240);transform-origin:center 0;">Budget Revenue Components</div>
<svg style="position:absolute;left:958.9000000000001px;top:710.3px;" width="132" height="132" viewBox="0 0 132 132"><path d="M66 66 L66.00 0.00 A66 66 0 1 1 50.75 130.21Z" fill="#4f81bd" stroke="#fff" stroke-width="2.2" stroke-linejoin="round"/><path d="M66 66 L50.75 130.21 A66 66 0 0 1 39.08 5.74Z" fill="#c0504d" stroke="#fff" stroke-width="2.2" stroke-linejoin="round"/><path d="M66 66 L39.08 5.74 A66 66 0 0 1 56.42 0.70Z" fill="#9bbb59" stroke="#fff" stroke-width="2.2" stroke-linejoin="round"/><path d="M66 66 L56.42 0.70 A66 66 0 0 1 66.00 0.00Z" fill="#8064a2" stroke="#fff" stroke-width="2.2" stroke-linejoin="round"/></svg>
<div style="position:absolute;left:1190px;top:721.0px;width:7px;height:7px;background:#4f81bd"></div>
<div class="t" style="left:1204.00px;top:715.93px;font-size:16.90px;font-weight:normal;color:#595959;transform:scaleX(0.9648);transform-origin:left 0;">Product Revenue</div>
<div style="position:absolute;left:1190px;top:756.5px;width:7px;height:7px;background:#c0504d"></div>
<div class="t" style="left:1204.00px;top:751.43px;font-size:16.90px;font-weight:normal;color:#595959;transform:scaleX(0.9260);transform-origin:left 0;">Services Revenue</div>
<div style="position:absolute;left:1190px;top:792.7px;width:7px;height:7px;background:#9bbb59"></div>
<div class="t" style="left:1204.00px;top:787.63px;font-size:16.90px;font-weight:normal;color:#595959;transform:scaleX(0.9727);transform-origin:left 0;">Maintenance Revenue</div>
<div style="position:absolute;left:1190px;top:828.6px;width:7px;height:7px;background:#8064a2"></div>
<div class="t" style="left:1204.00px;top:823.53px;font-size:16.90px;font-weight:normal;color:#595959;transform:scaleX(0.9659);transform-origin:left 0;">Other Revenue</div>
<div style="position:absolute;left:435px;top:881px;width:458px;height:61px;background:#4f81bd"></div>
<div style="position:absolute;left:908px;top:881px;width:1015px;height:61px;background:#4f81bd"></div>
<div style="position:absolute;left:435px;top:1271.5px;width:458px;height:59px;background:#ebf1de"></div>
<div style="position:absolute;left:908px;top:1271.5px;width:1015px;height:59px;background:#ebf1de"></div>
<div style="position:absolute;left:1364px;top:972px;width:115px;height:30px;background:#ffc7ce"></div>
<div style="position:absolute;left:1364px;top:1002px;width:115px;height:30px;background:#c6efce"></div>
<div style="position:absolute;left:1364px;top:1032px;width:115px;height:60px;background:#ffc7ce"></div>
<div style="position:absolute;left:1364px;top:1100px;width:115px;height:27.5px;background:#ffc7ce"></div>
<div style="position:absolute;left:1364px;top:1176.5px;width:115px;height:30.5px;background:#c6efce"></div>
<div style="position:absolute;left:1364px;top:1225px;width:115px;height:27px;background:#c6efce"></div>
<div style="position:absolute;left:1364px;top:1272.5px;width:115px;height:26.5px;background:#c6efce"></div>
<div style="position:absolute;left:1700px;top:972px;width:115px;height:30px;background:#ffc7ce"></div>
<div style="position:absolute;left:1700px;top:1002px;width:115px;height:30px;background:#c6efce"></div>
<div style="position:absolute;left:1700px;top:1032px;width:115px;height:60px;background:#ffc7ce"></div>
<div style="position:absolute;left:1700px;top:1100px;width:115px;height:27.5px;background:#ffc7ce"></div>
<div style="position:absolute;left:1700px;top:1176.5px;width:115px;height:30.5px;background:#c6efce"></div>
<div style="position:absolute;left:1700px;top:1225px;width:115px;height:27px;background:#c6efce"></div>
<div style="position:absolute;left:1700px;top:1272.5px;width:115px;height:26.5px;background:#c6efce"></div>
<div style="position:absolute;left:434.5px;top:880.5px;width:459.5px;height:249.0px;border:2px solid #363636;box-sizing:border-box"></div>
<div style="position:absolute;left:434.5px;top:941px;width:459.5px;height:2px;background:#363636"></div>
<div style="position:absolute;left:434.5px;top:1146px;width:459.5px;height:108.5px;border:2px solid #363636;box-sizing:border-box"></div>
<div style="position:absolute;left:434.5px;top:1270.5px;width:459.5px;height:61.0px;border:2px solid #363636;box-sizing:border-box"></div>
<div style="position:absolute;left:434.5px;top:1347.5px;width:459.5px;height:52.5px;border:2px solid #363636;box-sizing:border-box"></div>
<div style="position:absolute;left:907px;top:880.5px;width:2px;height:480px;background:#363636"></div>
<div style="position:absolute;left:1921.5px;top:880.5px;width:2px;height:480px;background:#363636"></div>
<div style="position:absolute;left:907px;top:880.5px;width:1016.5px;height:2px;background:#363636"></div>
<div style="position:absolute;left:907px;top:941px;width:1016.5px;height:2px;background:#363636"></div>
<div style="position:absolute;left:907px;top:1098px;width:1016.5px;height:2px;background:#363636"></div>
<div style="position:absolute;left:907px;top:1127.5px;width:1016.5px;height:2px;background:#363636"></div>
<div style="position:absolute;left:907px;top:1146px;width:1016.5px;height:2px;background:#363636"></div>
<div style="position:absolute;left:907px;top:1222px;width:1016.5px;height:2px;background:#363636"></div>
<div style="position:absolute;left:907px;top:1252.5px;width:1016.5px;height:2px;background:#363636"></div>
<div style="position:absolute;left:907px;top:1270.5px;width:1016.5px;height:2px;background:#363636"></div>
<div style="position:absolute;left:907px;top:1329.5px;width:1016.5px;height:2px;background:#363636"></div>
<div style="position:absolute;left:907px;top:1347.5px;width:1016.5px;height:2px;background:#363636"></div>
<div class="t" style="left:439.30px;top:917.75px;font-size:20.30px;font-weight:bold;color:#fff;transform:scaleX(0.9123);transform-origin:left 0;">Account Descriptions</div>
<div class="t" style="left:1392.82px;top:887.85px;font-size:20.30px;font-weight:bold;color:#fff;transform:scaleX(0.9743);transform-origin:center 0;">2021</div>
<div class="t" style="left:919.30px;top:917.75px;font-size:20.30px;font-weight:bold;color:#fff;transform:scaleX(0.9289);transform-origin:left 0;">Budget-22</div>
<div class="t" style="left:1064.30px;top:917.75px;font-size:20.30px;font-weight:bold;color:#fff;transform:scaleX(0.9202);transform-origin:left 0;">Act</div>
<div class="t" style="left:1176.00px;top:917.75px;font-size:20.30px;font-weight:bold;color:#fff;transform:scaleX(0.8241);transform-origin:left 0;">Fcst</div>
<div class="t" style="left:1255.70px;top:917.75px;font-size:20.30px;font-weight:bold;color:#fff;transform:scaleX(0.9124);transform-origin:left 0;">Act Ytd+Fct</div>
<div class="t" style="left:1381.40px;top:917.75px;font-size:20.30px;font-weight:bold;color:#fff;transform:scaleX(0.9495);transform-origin:left 0;">Variance</div>
<div class="t" style="left:1506.60px;top:917.75px;font-size:20.30px;font-weight:bold;color:#fff;transform:scaleX(0.9403);transform-origin:left 0;">Var %</div>
<div class="t" style="left:1616.50px;top:917.75px;font-size:20.30px;font-weight:bold;color:#fff;transform:scaleX(0.8634);transform-origin:left 0;">Act LY</div>
<div class="t" style="left:1718.30px;top:917.75px;font-size:20.30px;font-weight:bold;color:#fff;transform:scaleX(0.9447);transform-origin:left 0;">Variance</div>
<div class="t" style="left:1843.20px;top:917.75px;font-size:20.30px;font-weight:bold;color:#fff;transform:scaleX(0.9349);transform-origin:left 0;">Var %</div>
<div class="t" style="left:439.30px;top:948.55px;font-size:19.00px;font-weight:bold;color:#111;transform:scaleX(0.9722);transform-origin:left 0;">Revenue</div>
<div class="t" style="left:469.80px;top:978.45px;font-size:19.00px;font-weight:normal;color:#3c3c3c;transform:scaleX(1.0394);transform-origin:left 0;">40010 Product Revenue</div>
<div class="t" style="left:469.80px;top:1008.35px;font-size:19.00px;font-weight:normal;color:#3c3c3c;transform:scaleX(1.0160);transform-origin:left 0;">40020 Services Revenue</div>
<div class="t" style="left:469.80px;top:1038.45px;font-size:19.00px;font-weight:normal;color:#3c3c3c;transform:scaleX(1.0514);transform-origin:left 0;">40030 Maintenance Revenue</div>
<div class="t" style="left:469.80px;top:1067.85px;font-size:19.00px;font-weight:normal;color:#3c3c3c;transform:scaleX(1.0429);transform-origin:left 0;">40040 Other Revenue</div>
<div class="t" style="left:439.30px;top:1104.85px;font-size:19.00px;font-weight:bold;color:#111;transform:scaleX(0.9871);transform-origin:left 0;">Total Revenue</div>
<div class="t" style="left:439.30px;top:1152.85px;font-size:19.00px;font-weight:bold;color:#111;transform:scaleX(0.9542);transform-origin:left 0;">Cost of Goods Sold</div>
<div class="t" style="left:469.80px;top:1182.25px;font-size:19.00px;font-weight:normal;color:#3c3c3c;transform:scaleX(0.9950);transform-origin:left 0;">50010 COGS - Product Sales</div>
<div class="t" style="left:439.30px;top:1229.35px;font-size:19.00px;font-weight:bold;color:#111;transform:scaleX(0.9542);transform-origin:left 0;">Cost of Goods Sold</div>
<div class="t" style="left:439.30px;top:1276.85px;font-size:19.00px;font-weight:bold;color:#111;transform:scaleX(0.9749);transform-origin:left 0;">Gross Margin</div>
<div class="t" style="left:439.30px;top:1307.55px;font-size:19.00px;font-weight:bold;color:#111;transform:scaleX(0.9707);transform-origin:left 0;">Gross Margin %</div>
<div class="t" style="left:927.57px;top:978.45px;font-size:19.00px;font-weight:normal;color:#3c3c3c;transform:scaleX(1.0370);transform-origin:right 0;">8,804,077</div>
<div class="t" style="left:1042.07px;top:978.45px;font-size:19.00px;font-weight:normal;color:#3c3c3c;transform:scaleX(1.0370);transform-origin:right 0;">7,562,564</div>
<div class="t" style="left:1155.77px;top:978.45px;font-size:19.00px;font-weight:normal;color:#3c3c3c;transform:scaleX(1.0370);transform-origin:right 0;">2,441,451</div>
<div class="t" style="left:1259.20px;top:978.45px;font-size:19.00px;font-weight:normal;color:#3c3c3c;transform:scaleX(1.0370);transform-origin:right 0;">10,004,015</div>
<div class="t" style="left:1377.12px;top:978.45px;font-size:19.00px;font-weight:normal;color:#d92d3f;transform:scaleX(1.0370);transform-origin:right 0;">(1,199,938)</div>
<div class="t" style="left:1521.90px;top:978.45px;font-size:19.00px;font-weight:normal;color:#3c3c3c;transform:scaleX(1.0370);transform-origin:right 0;">-12.0%</div>
<div class="t" style="left:1606.47px;top:978.45px;font-size:19.00px;font-weight:normal;color:#3c3c3c;transform:scaleX(1.0370);transform-origin:right 0;">9,757,863</div>
<div class="t" style="left:1729.06px;top:978.45px;font-size:19.00px;font-weight:normal;color:#d92d3f;transform:scaleX(1.0370);transform-origin:right 0;">(953,786)</div>
<div class="t" style="left:1868.77px;top:978.45px;font-size:19.00px;font-weight:normal;color:#3c3c3c;transform:scaleX(1.0370);transform-origin:right 0;">-9.8%</div>
<div class="t" style="left:927.57px;top:1008.35px;font-size:19.00px;font-weight:normal;color:#3c3c3c;transform:scaleX(1.0370);transform-origin:right 0;">6,491,100</div>
<div class="t" style="left:1042.07px;top:1008.35px;font-size:19.00px;font-weight:normal;color:#3c3c3c;transform:scaleX(1.0370);transform-origin:right 0;">4,096,731</div>
<div class="t" style="left:1155.77px;top:1008.35px;font-size:19.00px;font-weight:normal;color:#3c3c3c;transform:scaleX(1.0370);transform-origin:right 0;">1,542,375</div>
<div class="t" style="left:1269.77px;top:1008.35px;font-size:19.00px;font-weight:normal;color:#3c3c3c;transform:scaleX(1.0370);transform-origin:right 0;">5,639,106</div>
<div class="t" style="left:1400.02px;top:1008.35px;font-size:19.00px;font-weight:normal;color:#2b7d38;transform:scaleX(1.0370);transform-origin:right 0;">851,994</div>
<div class="t" style="left:1528.23px;top:1008.35px;font-size:19.00px;font-weight:normal;color:#3c3c3c;transform:scaleX(1.0370);transform-origin:right 0;">15.1%</div>
<div class="t" style="left:1606.47px;top:1008.35px;font-size:19.00px;font-weight:normal;color:#3c3c3c;transform:scaleX(1.0370);transform-origin:right 0;">5,300,527</div>
<div class="t" style="left:1720.77px;top:1008.35px;font-size:19.00px;font-weight:normal;color:#2b7d38;transform:scaleX(1.0370);transform-origin:right 0;">1,190,573</div>
<div class="t" style="left:1864.53px;top:1008.35px;font-size:19.00px;font-weight:normal;color:#3c3c3c;transform:scaleX(1.0370);transform-origin:right 0;">22.5%</div>
<div class="t" style="left:943.42px;top:1038.45px;font-size:19.00px;font-weight:normal;color:#3c3c3c;transform:scaleX(1.0370);transform-origin:right 0;">715,956</div>
<div class="t" style="left:1057.92px;top:1038.45px;font-size:19.00px;font-weight:normal;color:#3c3c3c;transform:scaleX(1.0370);transform-origin:right 0;">745,818</div>
<div class="t" style="left:1171.62px;top:1038.45px;font-size:19.00px;font-weight:normal;color:#3c3c3c;transform:scaleX(1.0370);transform-origin:right 0;">232,924</div>
<div class="t" style="left:1285.62px;top:1038.45px;font-size:19.00px;font-weight:normal;color:#3c3c3c;transform:scaleX(1.0370);transform-origin:right 0;">978,742</div>
<div class="t" style="left:1392.96px;top:1038.45px;font-size:19.00px;font-weight:normal;color:#d92d3f;transform:scaleX(1.0370);transform-origin:right 0;">(262,786)</div>
<div class="t" style="left:1521.90px;top:1038.45px;font-size:19.00px;font-weight:normal;color:#3c3c3c;transform:scaleX(1.0370);transform-origin:right 0;">-26.8%</div>
<div class="t" style="left:1606.47px;top:1038.45px;font-size:19.00px;font-weight:normal;color:#3c3c3c;transform:scaleX(1.0370);transform-origin:right 0;">1,004,036</div>
<div class="t" style="left:1729.06px;top:1038.45px;font-size:19.00px;font-weight:normal;color:#d92d3f;transform:scaleX(1.0370);transform-origin:right 0;">(288,080)</div>
<div class="t" style="left:1858.20px;top:1038.45px;font-size:19.00px;font-weight:normal;color:#3c3c3c;transform:scaleX(1.0370);transform-origin:right 0;">-28.7%</div>
<div class="t" style="left:943.42px;top:1067.85px;font-size:19.00px;font-weight:normal;color:#3c3c3c;transform:scaleX(1.0370);transform-origin:right 0;">380,124</div>
<div class="t" style="left:1057.92px;top:1067.85px;font-size:19.00px;font-weight:normal;color:#3c3c3c;transform:scaleX(1.0370);transform-origin:right 0;">363,792</div>
<div class="t" style="left:1171.62px;top:1067.85px;font-size:19.00px;font-weight:normal;color:#3c3c3c;transform:scaleX(1.0370);transform-origin:right 0;">140,820</div>
<div class="t" style="left:1285.62px;top:1067.85px;font-size:19.00px;font-weight:normal;color:#3c3c3c;transform:scaleX(1.0370);transform-origin:right 0;">504,612</div>
<div class="t" style="left:1392.96px;top:1067.85px;font-size:19.00px;font-weight:normal;color:#d92d3f;transform:scaleX(1.0370);transform-origin:right 0;">(124,488)</div>
<div class="t" style="left:1521.90px;top:1067.85px;font-size:19.00px;font-weight:normal;color:#3c3c3c;transform:scaleX(1.0370);transform-origin:right 0;">-24.7%</div>
<div class="t" style="left:1622.32px;top:1067.85px;font-size:19.00px;font-weight:normal;color:#3c3c3c;transform:scaleX(1.0370);transform-origin:right 0;">494,789</div>
<div class="t" style="left:1730.47px;top:1067.85px;font-size:19.00px;font-weight:normal;color:#d92d3f;transform:scaleX(1.0370);transform-origin:right 0;">(114,665)</div>
<div class="t" style="left:1858.20px;top:1067.85px;font-size:19.00px;font-weight:normal;color:#3c3c3c;transform:scaleX(1.0370);transform-origin:right 0;">-23.2%</div>
<div class="t" style="left:917.00px;top:1104.85px;font-size:19.00px;font-weight:bold;color:#111;transform:scaleX(1.0300);transform-origin:right 0;">16,391,257</div>
<div class="t" style="left:1031.50px;top:1104.85px;font-size:19.00px;font-weight:bold;color:#111;transform:scaleX(1.0300);transform-origin:right 0;">12,768,904</div>
<div class="t" style="left:1155.77px;top:1104.85px;font-size:19.00px;font-weight:bold;color:#111;transform:scaleX(1.0300);transform-origin:right 0;">4,357,570</div>
<div class="t" style="left:1259.20px;top:1104.85px;font-size:19.00px;font-weight:bold;color:#111;transform:scaleX(1.0300);transform-origin:right 0;">17,126,474</div>
<div class="t" style="left:1392.96px;top:1104.85px;font-size:19.00px;font-weight:bold;color:#d92d3f;transform:scaleX(1.0300);transform-origin:right 0;">(735,217)</div>
<div class="t" style="left:1532.47px;top:1104.85px;font-size:19.00px;font-weight:bold;color:#111;transform:scaleX(1.0300);transform-origin:right 0;">-4.3%</div>
<div class="t" style="left:1595.90px;top:1104.85px;font-size:19.00px;font-weight:bold;color:#111;transform:scaleX(1.0300);transform-origin:right 0;">16,557,215</div>
<div class="t" style="left:1729.06px;top:1104.85px;font-size:19.00px;font-weight:bold;color:#d92d3f;transform:scaleX(1.0300);transform-origin:right 0;">(165,958)</div>
<div class="t" style="left:1868.77px;top:1104.85px;font-size:19.00px;font-weight:bold;color:#111;transform:scaleX(1.0300);transform-origin:right 0;">-1.0%</div>
<div class="t" style="left:927.57px;top:1182.25px;font-size:19.00px;font-weight:normal;color:#3c3c3c;transform:scaleX(1.0370);transform-origin:right 0;">1,975,837</div>
<div class="t" style="left:1042.07px;top:1182.25px;font-size:19.00px;font-weight:normal;color:#3c3c3c;transform:scaleX(1.0370);transform-origin:right 0;">2,562,847</div>
<div class="t" style="left:1171.62px;top:1182.25px;font-size:19.00px;font-weight:normal;color:#3c3c3c;transform:scaleX(1.0370);transform-origin:right 0;">892,804</div>
<div class="t" style="left:1269.77px;top:1182.25px;font-size:19.00px;font-weight:normal;color:#3c3c3c;transform:scaleX(1.0370);transform-origin:right 0;">3,455,651</div>
<div class="t" style="left:1384.17px;top:1182.25px;font-size:19.00px;font-weight:normal;color:#2b7d38;transform:scaleX(1.0370);transform-origin:right 0;">1,479,815</div>
<div class="t" style="left:1528.23px;top:1182.25px;font-size:19.00px;font-weight:normal;color:#3c3c3c;transform:scaleX(1.0370);transform-origin:right 0;">42.8%</div>
<div class="t" style="left:1606.47px;top:1182.25px;font-size:19.00px;font-weight:normal;color:#3c3c3c;transform:scaleX(1.0370);transform-origin:right 0;">3,442,916</div>
<div class="t" style="left:1720.77px;top:1182.25px;font-size:19.00px;font-weight:normal;color:#2b7d38;transform:scaleX(1.0370);transform-origin:right 0;">1,467,079</div>
<div class="t" style="left:1864.53px;top:1182.25px;font-size:19.00px;font-weight:normal;color:#3c3c3c;transform:scaleX(1.0370);transform-origin:right 0;">42.6%</div>
<div class="t" style="left:927.57px;top:1229.35px;font-size:19.00px;font-weight:bold;color:#111;transform:scaleX(1.0300);transform-origin:right 0;">1,975,837</div>
<div class="t" style="left:1042.07px;top:1229.35px;font-size:19.00px;font-weight:bold;color:#111;transform:scaleX(1.0300);transform-origin:right 0;">2,562,847</div>
<div class="t" style="left:1171.62px;top:1229.35px;font-size:19.00px;font-weight:bold;color:#111;transform:scaleX(1.0300);transform-origin:right 0;">892,804</div>
<div class="t" style="left:1269.77px;top:1229.35px;font-size:19.00px;font-weight:bold;color:#111;transform:scaleX(1.0300);transform-origin:right 0;">3,455,651</div>
<div class="t" style="left:1384.17px;top:1229.35px;font-size:19.00px;font-weight:bold;color:#176f2a;transform:scaleX(1.0300);transform-origin:right 0;">1,479,815</div>
<div class="t" style="left:1528.23px;top:1229.35px;font-size:19.00px;font-weight:bold;color:#111;transform:scaleX(1.0300);transform-origin:right 0;">42.8%</div>
<div class="t" style="left:1606.47px;top:1229.35px;font-size:19.00px;font-weight:bold;color:#111;transform:scaleX(1.0300);transform-origin:right 0;">3,442,916</div>
<div class="t" style="left:1720.77px;top:1229.35px;font-size:19.00px;font-weight:bold;color:#176f2a;transform:scaleX(1.0300);transform-origin:right 0;">1,467,079</div>
<div class="t" style="left:1864.53px;top:1229.35px;font-size:19.00px;font-weight:bold;color:#111;transform:scaleX(1.0300);transform-origin:right 0;">42.6%</div>
<div class="t" style="left:917.00px;top:1276.85px;font-size:19.00px;font-weight:bold;color:#111;transform:scaleX(1.0300);transform-origin:right 0;">14,415,420</div>
<div class="t" style="left:1031.50px;top:1276.85px;font-size:19.00px;font-weight:bold;color:#111;transform:scaleX(1.0300);transform-origin:right 0;">10,206,057</div>
<div class="t" style="left:1155.77px;top:1276.85px;font-size:19.00px;font-weight:bold;color:#111;transform:scaleX(1.0300);transform-origin:right 0;">3,464,766</div>
<div class="t" style="left:1259.20px;top:1276.85px;font-size:19.00px;font-weight:bold;color:#111;transform:scaleX(1.0300);transform-origin:right 0;">13,670,823</div>
<div class="t" style="left:1400.02px;top:1276.85px;font-size:19.00px;font-weight:bold;color:#176f2a;transform:scaleX(1.0300);transform-origin:right 0;">744,597</div>
<div class="t" style="left:1538.79px;top:1276.85px;font-size:19.00px;font-weight:bold;color:#111;transform:scaleX(1.0300);transform-origin:right 0;">5.4%</div>
<div class="t" style="left:1596.95px;top:1276.85px;font-size:19.00px;font-weight:bold;color:#111;transform:scaleX(1.0300);transform-origin:right 0;">13,114,299</div>
<div class="t" style="left:1720.77px;top:1276.85px;font-size:19.00px;font-weight:bold;color:#176f2a;transform:scaleX(1.0300);transform-origin:right 0;">1,301,122</div>
<div class="t" style="left:1875.09px;top:1276.85px;font-size:19.00px;font-weight:bold;color:#111;transform:scaleX(1.0300);transform-origin:right 0;">9.9%</div>
<div class="t" style="left:963.93px;top:1307.55px;font-size:19.00px;font-weight:bold;color:#111;transform:scaleX(1.0300);transform-origin:right 0;">87.9%</div>
<div class="t" style="left:1077.63px;top:1307.55px;font-size:19.00px;font-weight:bold;color:#111;transform:scaleX(1.0300);transform-origin:right 0;">79.9%</div>
<div class="t" style="left:1192.33px;top:1307.55px;font-size:19.00px;font-weight:bold;color:#111;transform:scaleX(1.0300);transform-origin:right 0;">79.5%</div>
<div class="t" style="left:1306.03px;top:1307.55px;font-size:19.00px;font-weight:bold;color:#111;transform:scaleX(1.0300);transform-origin:right 0;">79.8%</div>
<div class="t" style="left:1430.99px;top:1307.55px;font-size:19.00px;font-weight:bold;color:#111;transform:scaleX(1.0300);transform-origin:right 0;">8.1%</div>
<div class="t" style="left:1528.23px;top:1307.55px;font-size:19.00px;font-weight:bold;color:#111;transform:scaleX(1.0300);transform-origin:right 0;">10.2%</div>
<div class="t" style="left:1642.43px;top:1307.55px;font-size:19.00px;font-weight:bold;color:#111;transform:scaleX(1.0300);transform-origin:right 0;">79.2%</div>
<div class="t" style="left:1767.09px;top:1307.55px;font-size:19.00px;font-weight:bold;color:#111;transform:scaleX(1.0300);transform-origin:right 0;">8.7%</div>
<div class="t" style="left:1865.57px;top:1307.55px;font-size:19.00px;font-weight:bold;color:#111;transform:scaleX(1.0300);transform-origin:right 0;">11.0%</div>
<div class="t" style="left:439.30px;top:1355.85px;font-size:19.00px;font-weight:bold;color:#111;transform:scaleX(0.9520);transform-origin:left 0;">Operational Expenses</div>
<div style="position:absolute;left:423px;top:1359px;width:2069px;height:41px;background:#e4e4e4"></div>
<div style="position:absolute;left:366px;top:1359px;width:57px;height:41px;background:#e4e4e4"></div>
<div style="position:absolute;left:2498px;top:288px;width:22px;height:1070px;background:#dadada"></div>
<div style="position:absolute;left:2498px;top:288px;width:22px;height:21px;background:#fff;border:1px solid #b5b5b5;box-sizing:border-box"></div>
<div style="position:absolute;left:2498px;top:309px;width:22px;height:223px;background:#fff;border:1px solid #b5b5b5;box-sizing:border-box"></div>
<div style="position:absolute;left:2498px;top:1338px;width:22px;height:21px;background:#fff;border:1px solid #b5b5b5;box-sizing:border-box"></div>
<svg style="position:absolute;left:2503px;top:293px;" width="12" height="10" viewBox="0 0 12 10"><path d="M1 8 L6 2.5 L11 8Z" fill="#555"/></svg>
<svg style="position:absolute;left:2503px;top:1343px;" width="12" height="10" viewBox="0 0 12 10"><path d="M1 2 L6 7.5 L11 2Z" fill="#555"/></svg>
<div style="position:absolute;left:366px;top:1359px;width:2158px;height:1px;background:#c9c9c9"></div>
<div style="position:absolute;left:515px;top:1359px;width:146px;height:34px;background:#fff;border-left:1px solid #c9c9c9;border-right:1px solid #c9c9c9;box-sizing:border-box"></div>
<div style="position:absolute;left:515px;top:1392.5px;width:146px;height:3px;background:#217346"></div>
<div class="t" style="left:534.50px;top:1366.58px;font-size:20.50px;font-weight:bold;color:#217346;transform:scaleX(0.9148);transform-origin:left 0;">PL Variance</div>
<svg style="position:absolute;left:403px;top:1374px;" width="12" height="14" viewBox="0 0 12 14"><path d="M9.5 1.5 L2.5 7 L9.5 12.5Z" fill="#c3c3c3"/></svg>
<svg style="position:absolute;left:446px;top:1374px;" width="12" height="14" viewBox="0 0 12 14"><path d="M2.5 1.5 L9.5 7 L2.5 12.5Z" fill="#c3c3c3"/></svg>
<svg style="position:absolute;left:1616px;top:1371px;" width="8" height="20" viewBox="0 0 8 20"><circle cx="4" cy="3" r="1.3" fill="#999"/><circle cx="4" cy="10" r="1.3" fill="#999"/><circle cx="4" cy="17" r="1.3" fill="#999"/></svg>
<div style="position:absolute;left:1642px;top:1370.5px;width:849px;height:20.5px;background:#dadada"></div>
<div style="position:absolute;left:1642px;top:1370.5px;width:21px;height:20.5px;background:#fff;border:1px solid #b5b5b5;box-sizing:border-box"></div>
<div style="position:absolute;left:1663px;top:1370.5px;width:412px;height:20.5px;background:#fff;border:1px solid #b5b5b5;box-sizing:border-box"></div>
<div style="position:absolute;left:2470px;top:1370.5px;width:21px;height:20.5px;background:#fff;border:1px solid #b5b5b5;box-sizing:border-box"></div>
<svg style="position:absolute;left:1647px;top:1375px;" width="12" height="12" viewBox="0 0 12 12"><path d="M8.5 1.5 L3 6 L8.5 10.5Z" fill="#555"/></svg>
<svg style="position:absolute;left:2475px;top:1375px;" width="12" height="12" viewBox="0 0 12 12"><path d="M3.5 1.5 L9 6 L3.5 10.5Z" fill="#555"/></svg>
<div style="position:absolute;left:0;top:0;width:2559px;height:1436px;box-sizing:border-box;border:6px solid #b2b4b8;border-radius:38px;box-shadow:0 0 0 60px #fff"></div>
</body></html>
